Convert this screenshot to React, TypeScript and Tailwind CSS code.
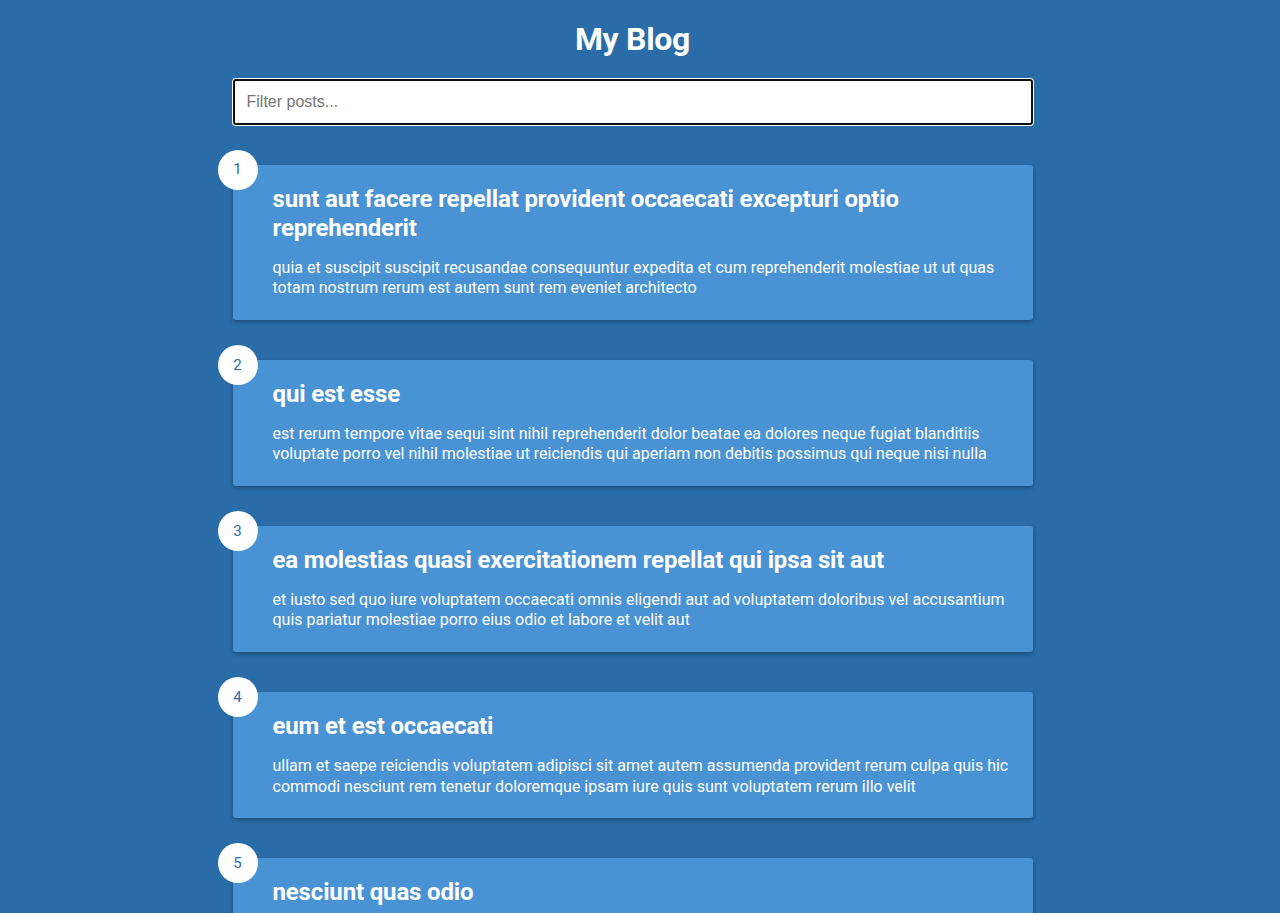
import React from "react";

const posts = [
  {
    id: 1,
    title: "sunt aut facere repellat provident occaecati excepturi optio reprehenderit",
    body: "quia et suscipit suscipit recusandae consequuntur expedita et cum reprehenderit molestiae ut ut quas totam nostrum rerum est autem sunt rem eveniet architecto",
  },
  {
    id: 2,
    title: "qui est esse",
    body: "est rerum tempore vitae sequi sint nihil reprehenderit dolor beatae ea dolores neque fugiat blanditiis voluptate porro vel nihil molestiae ut reiciendis qui aperiam non debitis possimus qui neque nisi nulla",
  },
  {
    id: 3,
    title: "ea molestias quasi exercitationem repellat qui ipsa sit aut",
    body: "et iusto sed quo iure voluptatem occaecati omnis eligendi aut ad voluptatem doloribus vel accusantium quis pariatur molestiae porro eius odio et labore et velit aut",
  },
  {
    id: 4,
    title: "eum et est occaecati",
    body: "ullam et saepe reiciendis voluptatem adipisci sit amet autem assumenda provident rerum culpa quis hic commodi nesciunt rem tenetur doloremque ipsam iure quis sunt voluptatem rerum illo velit",
  },
  {
    id: 5,
    title: "nesciunt quas odio",
    body: "repudiandae veniam quaerat sunt sed alias aut fugiat sit autem sed est voluptatem omnis possimus esse voluptatibus quis est aut tenetur dolor neque",
  },
];

export default function App() {
  return (
    <div
      className="min-h-screen bg-[#296ca8] text-white flex flex-col items-center pb-[100px] pr-[15px]"
      style={{ fontFamily: "Roboto, 'Noto Sans', sans-serif" }}
    >
      <h1 className="text-[32px] font-bold text-center mt-[21px] leading-[1.172] tracking-[-0.3px]">My Blog</h1>
      <div className="mt-5 w-[80vw] max-w-[800px]">
        <input
          type="text"
          placeholder="Filter posts..."
          className="w-full h-[46px] px-3 text-[16px] bg-white text-black border-2 border-[#101010] rounded-[3px] ring-1 ring-white placeholder:text-[#757575] outline-none"
          style={{ fontFamily: "'Liberation Sans', Arial, sans-serif" }}
        />
      </div>
      {posts.map((p) => (
        <div
          key={p.id}
          className="relative flex bg-[#4992d3] rounded-[3px] shadow-[0_2px_4px_rgba(0,0,0,0.3)] px-5 pt-5 pb-[21px] mt-10 w-[80vw] max-w-[800px]"
        >
          <div className="absolute -top-[15px] -left-[15px] w-10 h-10 rounded-full bg-white text-[#296ca8] text-[15px] flex items-center justify-center">
            {p.id}
          </div>
          <div className="ml-5">
            <h2 className="m-0 text-[24px] font-bold leading-[29.5px] tracking-[-0.15px]">{p.title}</h2>
            <p className="mt-[14px] text-[16px] leading-[1.3]">{p.body}</p>
          </div>
        </div>
      ))}
    </div>
  );
}
